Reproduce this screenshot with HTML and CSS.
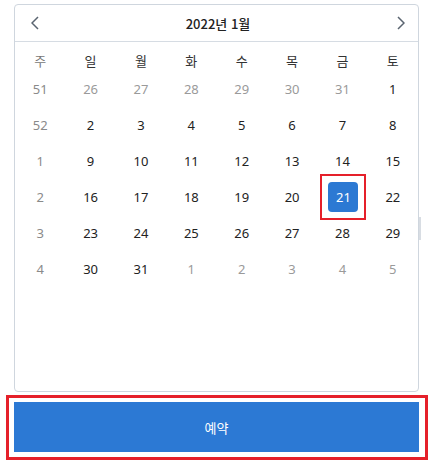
FILE: index.html
```html
<!DOCTYPE html>
<html lang="ko">
<head>
<meta charset="utf-8">
<link rel="stylesheet" href="styles.css">
</head>
<body>
<div class="page">
  <div class="card">
    <div class="header">
      <button class="nav"><svg width="8" height="14" viewBox="0 0 8 14"><polyline points="7,1 1,7 7,13" fill="none" stroke="#5a6470" stroke-width="1.5"/></svg></button>
      <div class="title">2022년 1월</div>
      <button class="nav"><svg width="8" height="14" viewBox="0 0 8 14"><polyline points="1,1 7,7 1,13" fill="none" stroke="#5a6470" stroke-width="1.5"/></svg></button>
    </div>
    <div class="grid">
      <div class="wd muted">주</div><div class="wd">일</div><div class="wd">월</div><div class="wd">화</div><div class="wd">수</div><div class="wd">목</div><div class="wd">금</div><div class="wd">토</div>

      <div class="d muted">51</div><div class="d other">26</div><div class="d other">27</div><div class="d other">28</div><div class="d other">29</div><div class="d other">30</div><div class="d other">31</div><div class="d">1</div>
      <div class="d muted">52</div><div class="d">2</div><div class="d">3</div><div class="d">4</div><div class="d">5</div><div class="d">6</div><div class="d">7</div><div class="d">8</div>
      <div class="d muted">1</div><div class="d">9</div><div class="d">10</div><div class="d">11</div><div class="d">12</div><div class="d">13</div><div class="d">14</div><div class="d">15</div>
      <div class="d muted">2</div><div class="d">16</div><div class="d">17</div><div class="d">18</div><div class="d">19</div><div class="d">20</div><div class="d"><span class="mark"><span class="sel">21</span></span></div><div class="d">22</div>
      <div class="d muted">3</div><div class="d">23</div><div class="d">24</div><div class="d">25</div><div class="d">26</div><div class="d">27</div><div class="d">28</div><div class="d">29</div>
      <div class="d muted">4</div><div class="d">30</div><div class="d">31</div><div class="d other">1</div><div class="d other">2</div><div class="d other">3</div><div class="d other">4</div><div class="d other">5</div>
    </div>
    <div class="thumb"></div>
  </div>
  <div class="reserve-wrap">
    <button class="reserve">예약</button>
  </div>
</div>
</body>
</html>
```

FILE: styles.css
```css
* { box-sizing: border-box; }
html, body {
  margin: 0;
  padding: 0;
  background: #fff;
}
body {
  font-family: "Noto Sans", "Noto Sans CJK KR", sans-serif;
  font-size: 13px;
  color: #222;
}
.page {
  padding: 4px 14px 11px 14px;
  width: 433px;
}
.card {
  position: relative;
  width: 405px;
  height: 388px;
  border: 1px solid #cfd6de;
  border-radius: 4px;
}
.header {
  height: 37px;
  border-bottom: 1px solid #d6dce3;
  display: flex;
  align-items: center;
  justify-content: space-between;
  padding: 0 10px 0 13px;
}
.nav {
  border: 0;
  background: none;
  padding: 0;
  width: 14px;
  height: 20px;
  display: flex;
  align-items: center;
  justify-content: center;
}
.title {
  font-family: "Noto Sans CJK KR", "Noto Sans", sans-serif;
  font-size: 13px;
  font-weight: 500;
  color: #222;
  padding-top: 1px;
}
.grid {
  display: grid;
  grid-template-columns: repeat(8, 1fr);
  grid-template-rows: 22px repeat(6, 36px);
  padding-top: 7px;
}
.wd, .d {
  display: flex;
  align-items: center;
  justify-content: center;
  line-height: 1;
}
.wd {
  font-family: "Noto Sans CJK KR", sans-serif;
  color: #333;
}
.muted { color: #8a8a8a; }
.wd.muted { color: #777; }
.other { color: #9a9a9a; }
.mark {
  display: block;
  padding: 6px;
  border: 2px solid #e5202a;
  margin-left: 2px;
}
.sel {
  width: 30px;
  height: 30px;
  border-radius: 4px;
  background: #2c79d3;
  color: #fff;
  display: flex;
  align-items: center;
  justify-content: center;
}
.thumb {
  position: absolute;
  right: -3px;
  top: 212px;
  width: 2px;
  height: 23px;
  background: #d8dde3;
}
.reserve-wrap {
  margin: 3px 0 0 -8px;
  width: 422px;
  border: 3px solid #e5202a;
  padding: 4px 6px 5px 5px;
}
.reserve {
  display: block;
  width: 405px;
  height: 50px;
  border: 0;
  border-radius: 0;
  background: #2c79d4;
  color: #fff;
  font-family: "Noto Sans CJK KR", sans-serif;
  font-size: 13px;
  padding: 0;
}
```
